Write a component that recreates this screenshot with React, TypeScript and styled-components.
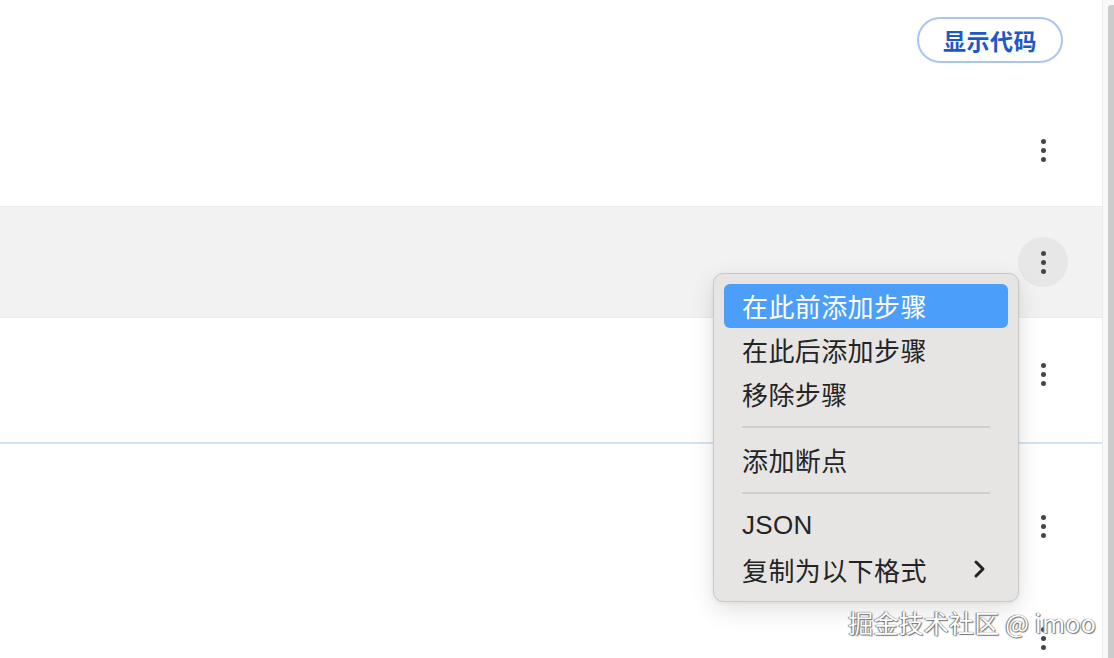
import styled, { createGlobalStyle } from "styled-components";

const GlobalStyle = createGlobalStyle`
  html, body {
    margin: 0;
    padding: 0;
    background: #ffffff;
    overflow: hidden;
  }
  body {
    font-family: "Noto Sans CJK SC", "Noto Sans", sans-serif;
  }
`;

const Page = styled.div`
  position: relative;
  display: flex;
  width: 1114px;
  height: 658px;
  overflow: hidden;
`;

const Main = styled.div`
  flex: 1;
  display: flex;
  flex-direction: column;
`;

const Header = styled.div`
  height: 94px;
  flex-shrink: 0;
  display: flex;
  justify-content: flex-end;
  align-items: flex-start;
  padding: 17px 39px 0 0;
  box-sizing: border-box;
`;

const CodeButton = styled.button`
  width: 146px;
  height: 46px;
  border: 2px solid #a9c6f2;
  border-radius: 23px;
  background: #ffffff;
  color: #1c58c8;
  font-family: "Noto Sans CJK SC", sans-serif;
  font-size: 23px;
  font-weight: 700;
  letter-spacing: 0.5px;
  padding: 0;
  cursor: pointer;
`;

const Row = styled.div<{ $active?: boolean }>`
  height: 112px;
  flex-shrink: 0;
  display: flex;
  justify-content: flex-end;
  align-items: center;
  padding-right: 34px;
  box-sizing: border-box;
  background: ${(p) => (p.$active ? "#f2f2f2" : "#ffffff")};
  border-top: 1px solid ${(p) => (p.$active ? "#ebebeb" : "transparent")};
  border-bottom: 1px solid ${(p) => (p.$active ? "#ebebeb" : "transparent")};
`;

const Gap = styled.div`
  height: 40px;
  flex-shrink: 0;
  display: flex;
  align-items: flex-start;
  padding-top: 12px;
  box-sizing: border-box;
`;

const DropLine = styled.div`
  width: 100%;
  height: 2px;
  background: #d3e3f5;
`;

const MoreButton = styled.div<{ $active?: boolean }>`
  width: 50px;
  height: 50px;
  border-radius: 50%;
  background: ${(p) => (p.$active ? "#e7e7e7" : "transparent")};
  display: flex;
  flex-direction: column;
  align-items: center;
  justify-content: center;
  gap: 4px;
`;

const Dot = styled.span`
  width: 5px;
  height: 5px;
  border-radius: 50%;
  background: #464646;
`;

const ScrollTrack = styled.div`
  width: 12px;
  flex-shrink: 0;
  border-left: 1px solid #ececec;
  background: #f8f8f8;
  display: flex;
  justify-content: flex-end;
  padding-top: 5px;
  box-sizing: border-box;
`;

const ScrollThumb = styled.div`
  width: 6px;
  height: 100%;
  border-radius: 3px 0 0 0;
  background: #cbcbcb;
`;

const Menu = styled.div`
  position: absolute;
  left: 713px;
  top: 273px;
  width: 306px;
  box-sizing: border-box;
  padding: 10px 10px 9px;
  background: #e6e5e4;
  border: 1px solid #c9c8c7;
  border-radius: 10px;
  box-shadow: 0 8px 24px rgba(0, 0, 0, 0.12), 0 1px 4px rgba(0, 0, 0, 0.06);
  display: flex;
  flex-direction: column;
`;

const MenuItem = styled.div<{ $highlight?: boolean }>`
  height: 44px;
  display: flex;
  align-items: center;
  justify-content: space-between;
  padding: 0 22px 2px 18px;
  box-sizing: border-box;
  border-radius: 6px;
  font-size: 26px;
  letter-spacing: 0.4px;
  color: ${(p) => (p.$highlight ? "#ffffff" : "#242424")};
  background: ${(p) => (p.$highlight ? "#4b9ef9" : "transparent")};
  font-family: "Noto Sans CJK SC", sans-serif;
`;

const LatinText = styled.span`
  font-family: "Liberation Sans", "Noto Sans CJK SC", sans-serif;
  font-size: 26px;
  letter-spacing: 0.3px;
`;

const Separator = styled.div`
  height: 22px;
  display: flex;
  align-items: center;
  padding: 0 18px;
  &::after {
    content: "";
    flex: 1;
    height: 2px;
    background: #cfcecd;
  }
`;

const Watermark = styled.div`
  position: absolute;
  right: 18px;
  top: 604px;
  font-size: 25px;
  font-family: "Noto Sans CJK SC", "Liberation Sans", sans-serif;
  color: #ffffff;
  text-shadow: 0 0 1px #555, 1px 1px 1px #777, -1px 0 1px #888;
  letter-spacing: 0.2px;
`;

function More({ active }: { active?: boolean }) {
  return (
    <MoreButton $active={active}>
      <Dot />
      <Dot />
      <Dot />
    </MoreButton>
  );
}

function Chevron() {
  return (
    <svg width="14" height="20" viewBox="0 0 14 20">
      <path d="M4 3 L11 10 L4 17" fill="none" stroke="#222" strokeWidth="3" strokeLinecap="round" strokeLinejoin="round" />
    </svg>
  );
}

export default function App() {
  return (
    <Page>
      <GlobalStyle />
      <Main>
        <Header>
          <CodeButton>显示代码</CodeButton>
        </Header>
        <Row>
          <More />
        </Row>
        <Row $active>
          <More active />
        </Row>
        <Row>
          <More />
        </Row>
        <Gap>
          <DropLine />
        </Gap>
        <Row>
          <More />
        </Row>
        <Row>
          <More />
        </Row>
      </Main>
      <ScrollTrack>
        <ScrollThumb />
      </ScrollTrack>
      <Menu>
        <MenuItem $highlight>在此前添加步骤</MenuItem>
        <MenuItem>在此后添加步骤</MenuItem>
        <MenuItem>移除步骤</MenuItem>
        <Separator />
        <MenuItem>添加断点</MenuItem>
        <Separator />
        <MenuItem>
          <LatinText>JSON</LatinText>
        </MenuItem>
        <MenuItem>
          复制为以下格式
          <Chevron />
        </MenuItem>
      </Menu>
      <Watermark>掘金技术社区 @ imoo</Watermark>
    </Page>
  );
}
